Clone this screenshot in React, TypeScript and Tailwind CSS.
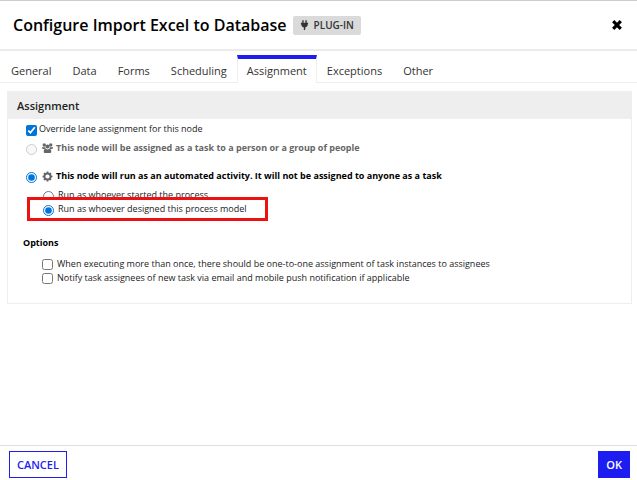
import { useState } from "react";

const tabs = ["General", "Data", "Forms", "Scheduling", "Assignment", "Exceptions", "Other"];

function PlugIcon() {
  return (
    <svg viewBox="0 0 16 18" className="h-[10px] w-[9px]" fill="currentColor" aria-hidden="true">
      <path d="M4 1.200a1.200 1.200 0 0 1 2.400 0V5h3.200V1.200a1.200 1.200 0 0 1 2.400 0V5h2.500v2H14c0 3.500-1.800 5.600-4.800 6.300V18H6.800v-4.700C3.800 12.600 2 10.500 2 7h-.5V5H4Z" />
    </svg>
  );
}

function GroupIcon() {
  return (
    <svg viewBox="0 0 22 20" className="ml-[5px] mr-[3px] h-[10px] w-[11px]" fill="currentColor" aria-hidden="true">
      <circle cx="4.5" cy="4" r="3.4" />
      <circle cx="17.5" cy="4" r="3.4" />
      <circle cx="11" cy="7" r="4" />
      <path d="M0 8.500h6.200c.3 1.600 1 2.600 1.900 3.300H2C.8 11.800 0 11 0 10ZM22 8.500h-6.200c-.3 1.600-1 2.600-1.900 3.300H20c1.200 0 2-.8 2-1.800ZM3.500 17c0-3.400 1.400-5.400 4-5.400 2 1.600 5 1.600 7 0 2.600 0 4 2 4 5.400 0 2-1 3-3 3h-9c-2 0-3-1-3-3Z" />
    </svg>
  );
}

function GearIcon() {
  return (
    <svg viewBox="0 0 22 22" className="ml-[5px] mr-[3px] size-[11px] text-[#666666]" fill="none" stroke="currentColor" aria-hidden="true">
      <circle cx="11" cy="11" r="6.200" strokeWidth="4" />
      <path d="M11 1v4M11 17v4M1 11h4M17 11h4M4 4l3 3M15 15l3 3M18 4l-3 3M7 15l-3 3" strokeWidth="3.400" />
    </svg>
  );
}

export default function App() {
  const [tab, setTab] = useState("Assignment");
  const [override, setOverride] = useState(true);
  const [mode, setMode] = useState("automated");
  const [runAs, setRunAs] = useState("designer");

  return (
    <div className="flex min-h-screen flex-col border-t border-[#cccccc] bg-white font-['Open_Sans',sans-serif] text-[9px] leading-[14px] text-[#222222]">
      <header className="flex h-[50px] items-center border-b-2 border-[#ebebeb] pl-[13px] pr-[14px]">
        <h1 className="text-[16px] font-semibold leading-6 text-black">Configure Import Excel to Database</h1>
        <span className="ml-[6px] flex h-[19px] items-center gap-[5px] rounded-xs bg-[#dadada] px-[7px] text-[10px] font-semibold text-[#333333]">
          <PlugIcon />
          PLUG-IN
        </span>
        <button type="button" aria-label="Close" className="ml-auto text-black">
          <svg viewBox="0 0 12 12" className="size-3" aria-hidden="true">
            <path d="M2.200 2.200 9.800 9.800M9.800 2.200 2.200 9.800" stroke="currentColor" strokeWidth="3.2" fill="none" />
          </svg>
        </button>
      </header>

      <nav role="tablist" className="mt-1 flex h-7 gap-px border-b border-[#eeeeee] pl-px">
        {tabs.map((name) => (
          <button
            key={name}
            type="button"
            role="tab"
            aria-selected={tab === name}
            onClick={() => setTab(name)}
            className={
              tab === name
                ? "-mx-px -mb-px border-x border-t-4 border-x-[#eeeeee] border-t-[#1d1df2] bg-white px-[9px] pb-px text-[11px] text-[#333333]"
                : "border-t-4 border-t-transparent px-[10px] text-[11px] text-[#333333]"
            }
          >
            {name}
          </button>
        ))}
      </nav>

      <main className="flex-1 pl-[7px] pr-[5px] pt-2">
        <section className="h-[213px] border border-[#eeeeee]">
          <h2 className="flex h-[27px] items-center bg-[#eeeeee] px-[9px] text-[11px] font-semibold">Assignment</h2>
          <div className="px-[18px] pt-[2px]">
            <label className="flex h-4 w-fit items-center gap-[2px]">
              <input
                type="checkbox"
                checked={override}
                onChange={() => setOverride(!override)}
                className="mt-[2px] size-[11px] accent-[#0074d9]"
              />
              Override lane assignment for this node
            </label>
            <label className="mt-[3px] flex h-4 w-fit items-center font-bold text-[#666666]">
              <input type="radio" name="mode" disabled className="mt-[3px] size-[11px]" />
              <GroupIcon />
              This node will be assigned as a task to a person or a group of people
            </label>
            <label className="mt-3 flex h-4 w-fit items-center font-bold text-black">
              <input
                type="radio"
                name="mode"
                checked={mode === "automated"}
                onChange={() => setMode("automated")}
                className="mt-[3px] size-[11px] accent-[#0074d9]"
              />
              <GearIcon />
              This node will run as an automated activity. It will not be assigned to anyone as a task
            </label>
            <div className="mt-[3px] flex flex-col pl-[17px]">
              <label className="flex h-4 w-fit items-center gap-1">
                <input
                  type="radio"
                  name="runAs"
                  checked={runAs === "starter"}
                  onChange={() => setRunAs("starter")}
                  className="mt-[3px] size-[11px]"
                />
                Run as whoever started the process
              </label>
              <div className="relative -ml-4 -mt-[6px] flex h-6 w-[241px] items-center border-3 border-[#ee1111] bg-white pl-[13px]">
                <label className="flex items-center gap-1">
                  <input
                    type="radio"
                    name="runAs"
                    checked={runAs === "designer"}
                    onChange={() => setRunAs("designer")}
                    className="mt-[3px] size-[11px] accent-[#0074d9]"
                  />
                  Run as whoever designed this process model
                </label>
              </div>
            </div>
          </div>

          <div className="mt-[15px] px-[15px]">
            <h3 className="font-bold text-black">Options</h3>
            <div className="mt-[7px] pl-[19px]">
              <label className="flex w-fit items-center gap-1">
                <input type="checkbox" className="size-[11px]" />
                When executing more than once, there should be one-to-one assignment of task instances to assignees
              </label>
              <label className="flex w-fit items-center gap-1">
                <input type="checkbox" className="size-[11px]" />
                Notify task assignees of new task via email and mobile push notification if applicable
              </label>
            </div>
          </div>
        </section>
      </main>

      <footer className="flex h-[35px] items-start justify-between border-t border-[#dddddd] pl-[9px] pr-[7px] pt-[5px]">
        <button type="button" className="h-[27px] border border-[#1d1df2] px-[7px] text-[11px] font-semibold text-[#1d1df2]">
          CANCEL
        </button>
        <button type="button" className="h-[27px] bg-[#1d1df2] px-2 text-[11px] font-semibold text-white">
          OK
        </button>
      </footer>
    </div>
  );
}
